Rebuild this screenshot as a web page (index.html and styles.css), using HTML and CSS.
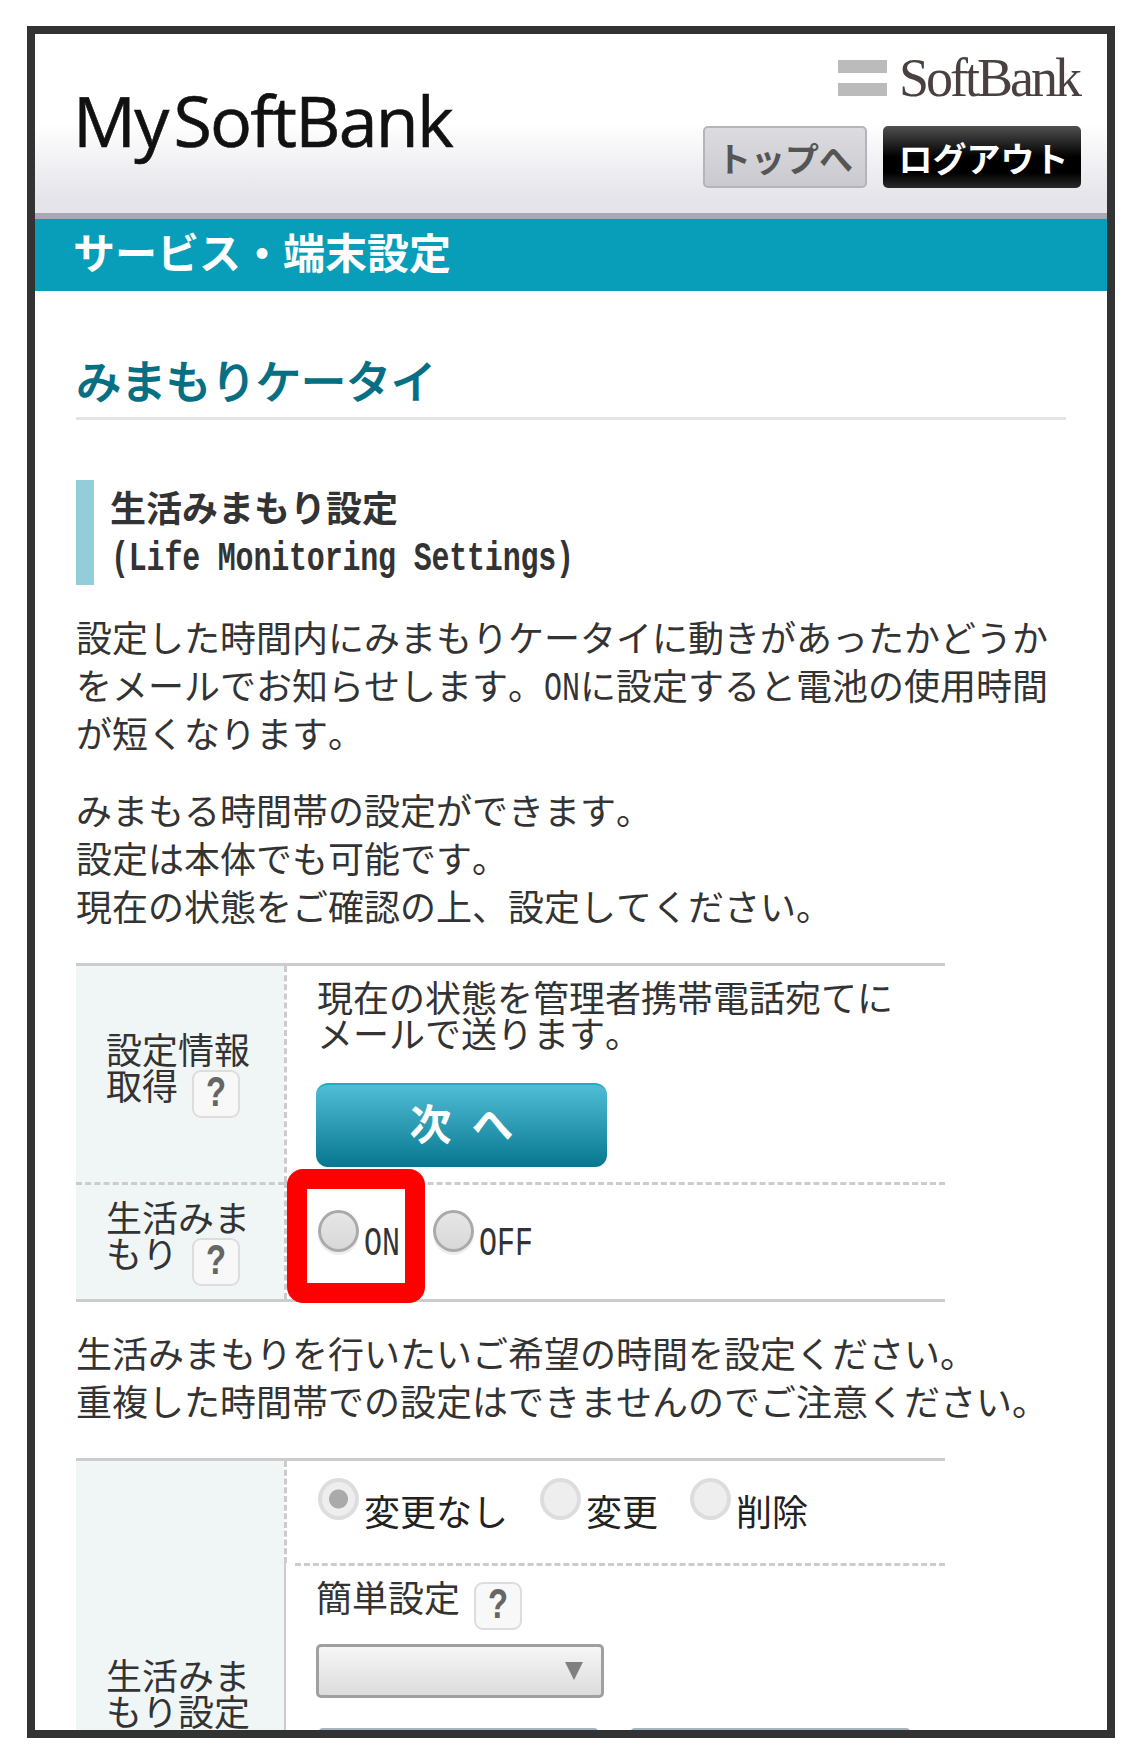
FILE: index.html
```html
<!DOCTYPE html>
<html lang="ja">
<head>
    <meta http-equiv="Content-Type" content="text/html; charset=UTF-8">
    <title>みまもりケータイ</title>
    <link rel="stylesheet" href="styles.css">
</head>
<body>
    <div class="frame">
        <div class="header">
            <div class="mysb-logo">My<span class="mysb-gap"></span>SoftBank</div>
            <div class="header-right">
                <div class="brand">
                    <div class="brand-mark"><i></i><i></i></div>
                    <div class="brand-name">SoftBank</div>
                </div>
                <div class="header-buttons">
                    <a class="btn-top">トップへ</a>
                    <a class="btn-logout">ログアウト</a>
                </div>
            </div>
        </div>
        <div class="band">サービス・端末設定</div>

        <div class="main">
            <h1 class="page-title">みまもりケータイ</h1>
            <h2 class="section-title">生活みまもり設定<br><span class="half half-bold">(Life Monitoring Settings)</span></h2>

            <p class="para">設定した時間内にみまもりケータイに動きがあったかどうかをメールでお知らせします。<span class="half">ON</span>に設定すると電池の使用時間が短くなります。</p>
            <p class="para">みまもる時間帯の設定ができます。<br>設定は本体でも可能です。<br>現在の状態をご確認の上、設定してください。</p>

            <div class="info-table status-table">
                <div class="label-cell"><div>設定情報<br>取得 <span class="help"><b>?</b></span></div></div>
                <div class="value-cell info-cell">
                    <div class="info-text">現在の状態を管理者携帯電話宛てに<br>メールで送ります。</div>
                    <a class="btn-next"><span>次</span><span>へ</span></a>
                </div>
                <div class="label-cell row-split"><div>生活みま<br>もり <span class="help"><b>?</b></span></div></div>
                <div class="value-cell row-split switch-cell">
                    <label class="choice"><input type="radio" name="life" class="radio"><span class="half">ON</span></label>
                    <label class="choice"><input type="radio" name="life" class="radio"><span class="half">OFF</span></label>
                </div>
            </div>

            <p class="para para-after">生活みまもりを行いたいご希望の時間を設定ください。<br>重複した時間帯での設定はできませんのでご注意ください。</p>

            <div class="info-table settings-table">
                <div class="label-cell settings-label"><div>生活みま<br>もり設定</div></div>
                <div class="value-cell mode-cell">
                    <label class="mode"><input type="radio" name="mode" class="radio radio-light" checked>変更なし</label>
                    <label class="mode"><input type="radio" name="mode" class="radio radio-light">変更</label>
                    <label class="mode"><input type="radio" name="mode" class="radio radio-light">削除</label>
                </div>
                <div class="value-cell simple-cell">
                    <div class="simple-title">簡単設定 <span class="help"><b>?</b></span></div>
                    <div class="select-box"><select></select></div>
                </div>
                <div class="value-cell time-cell">
                    <div class="time-select"></div>
                    <div class="time-select"></div>
                </div>
            </div>
        </div>

        <div class="highlight"></div>
    </div>
</body>
</html>
```

FILE: styles.css
```css
html, body {
    margin: 0;
    background-color: #fff;
}

body {
    padding: 26px 25px 26px 27px;
    font-family: "Noto Sans CJK JP", "Noto Sans", sans-serif;
    font-size: 36px;
    color: #333;
    font-kerning: none;
    text-spacing-trim: space-all;
}

.frame {
    position: relative;
    box-sizing: border-box;
    width: 1088px;
    height: 1712px;
    border: 8px solid #333;
    overflow: hidden;
}

/* header */
.header {
    display: flex;
    justify-content: space-between;
    box-sizing: border-box;
    height: 185px;
    padding: 26px 26px 0 38px;
    border-bottom: 6px solid #a8a8b3;
    background: linear-gradient(#fff 0%, #fff 50%, #e4e4ea 92%, #e4e4ea 100%);
}

.mysb-logo {
    margin-top: 20px;
    font-family: "Open Sans", sans-serif;
    font-size: 70px;
    font-kerning: normal;
    line-height: 80px;
    letter-spacing: -1.8px;
    color: #111;
    -webkit-text-stroke: 0.6px #111;
}

.mysb-gap {
    display: inline-block;
    width: 6px;
}

.header-right {
    display: flex;
    flex-direction: column;
    align-items: flex-end;
}

.brand {
    display: flex;
    gap: 12px;
    height: 36px;
    padding-right: 2px;
}

.brand-mark {
    display: flex;
    flex-direction: column;
    justify-content: space-between;
    width: 49px;
}

.brand-mark i {
    display: block;
    height: 13px;
    background-color: #bbb;
}

.brand-name {
    font-family: "Liberation Serif", serif;
    font-size: 54px;
    font-kerning: normal;
    line-height: 36px;
    letter-spacing: -3px;
    color: #4a4040;
}

.header-buttons {
    display: flex;
    gap: 16px;
    margin-top: 30px;
}

.btn-top, .btn-logout {
    display: flex;
    align-items: center;
    justify-content: center;
    box-sizing: border-box;
    height: 62px;
    font-size: 34px;
    font-weight: bold;
    border-radius: 5px;
}

.btn-top {
    width: 164px;
    color: #555;
    border: 2px solid #b4b4bc;
    background: linear-gradient(#dcdce0, #c9c9cf);
}

.btn-logout {
    width: 198px;
    padding-left: 3px;
    color: #fff;
    background: linear-gradient(#505050, #000 50%, #000 75%, #2a2a2a);
}

.band {
    height: 72px;
    padding-left: 38px;
    font-size: 42px;
    font-weight: bold;
    line-height: 64px;
    color: #fff;
    background-color: #089db8;
}

/* content */
.main {
    padding: 0 41px;
}

.page-title {
    margin: 0;
    padding: 63px 0 11px;
    font-size: 45px;
    font-weight: normal;
    line-height: 52px;
    color: #076f84;
    -webkit-text-stroke: 1.6px #076f84;
    border-bottom: 3px solid #e4e4e4;
}

.section-title {
    margin: 60px 0 0;
    padding: 2px 0 7px 16px;
    font-size: 36px;
    font-weight: bold;
    line-height: 48px;
    border-left: 18px solid #94cdda;
}

.half {
    display: inline-block;
    font-family: "Liberation Mono", monospace;
    font-size: 30px;
    font-weight: normal;
    line-height: 1;
    transform: scaleY(1.35);
    transform-origin: 50% 80%;
}

.half-bold {
    margin-left: 1px;
    font-weight: bold;
    letter-spacing: -0.2px;
}

.para {
    margin: 27px 0 0;
    padding-bottom: 2px;
    line-height: 48px;
}

.para-after {
    margin-top: 26px;
}

.info-table {
    display: grid;
    grid-template-columns: 208px 1fr;
    width: 869px;
    margin-top: 32px;
    border-top: 3px solid #ccc;
}

.status-table {
    border-bottom: 3px solid #ccc;
}

.label-cell {
    display: flex;
    align-items: center;
    box-sizing: border-box;
    padding-left: 30px;
    line-height: 36px;
    background-color: #f0f5f5;
}

.value-cell {
    padding-left: 31px;
    border-left: 3px dashed #ccc;
}

.row-split {
    border-top: 3px dashed #ccc;
}

.help {
    display: inline-flex;
    align-items: center;
    justify-content: center;
    box-sizing: border-box;
    width: 48px;
    height: 48px;
    margin: 4px 0 0 6px;
    line-height: 1;
    vertical-align: top;
    border: 2px solid #ddd;
    border-radius: 9px;
    background-color: #f8f8f8;
}

.help b {
    display: block;
    font-family: "Liberation Mono", monospace;
    font-size: 44px;
    color: #666;
    transform: scaleX(0.75);
}

.info-cell {
    height: 216px;
    box-sizing: border-box;
    padding-top: 12px;
}

.info-text {
    margin-left: -1px;
    line-height: 36px;
}

.btn-next {
    display: flex;
    align-items: center;
    justify-content: center;
    gap: 20px;
    box-sizing: border-box;
    width: 291px;
    height: 84px;
    margin: 33px 0 0 -2px;
    padding-bottom: 10px;
    font-size: 42px;
    font-weight: bold;
    color: #fff;
    border-top: 2px solid #27a9c4;
    border-radius: 12px;
    background: linear-gradient(#4fbdd5, #07778f);
}

.switch-cell {
    display: flex;
    box-sizing: border-box;
    height: 117px;
    padding-top: 25px;
}

.choice {
    display: flex;
    align-items: flex-start;
    gap: 5px;
    margin-right: 33px;
}

.choice .half {
    margin-top: 22px;
}

.radio {
    appearance: none;
    box-sizing: border-box;
    flex: none;
    width: 41px;
    height: 42px;
    margin: 0;
    border: 3px solid #aaa;
    border-radius: 50%;
    background: linear-gradient(#e6e6e6, #d8d8d8);
    box-shadow: 0 3px 0 #eee;
}

.radio-light {
    border: 4px solid #ddd;
    background: #eee;
    box-shadow: none;
}

.radio-light:checked {
    background: radial-gradient(circle, #aaa 0, #aaa 9px, #eee 10px);
}

.settings-table {
    grid-template-rows: auto auto 1fr;
    height: 465px;
    box-sizing: border-box;
}

.settings-label {
    grid-row: 1 / span 3;
}

.mode-cell {
    display: flex;
    box-sizing: border-box;
    height: 102px;
    padding-top: 17px;
    color: #222;
}

.mode {
    display: flex;
    align-items: flex-start;
    gap: 5px;
    margin-right: 32px;
    line-height: 64px;
}

.simple-cell, .time-cell {
    position: relative;
    border-left: 2px solid #ccc;
    padding-left: 30px;
}

.simple-cell {
    padding-top: 15px;
}

.simple-cell::before {
    content: "";
    position: absolute;
    top: 0;
    left: 9px;
    right: 0;
    border-top: 3px dashed #ccc;
}

.simple-title {
    height: 52px;
    line-height: 36px;
}

.select-box {
    position: relative;
    width: 288px;
    height: 54px;
    margin-top: 14px;
}

.select-box select {
    appearance: none;
    display: block;
    box-sizing: border-box;
    width: 100%;
    height: 100%;
    border: 3px solid #a0a0a0;
    border-radius: 5px;
    background: linear-gradient(#f6f6f6, #dcdcdc);
}

.select-box::after {
    content: "";
    position: absolute;
    top: 18px;
    right: 21px;
    border-top: 18px solid #808080;
    border-left: 9px solid transparent;
    border-right: 9px solid transparent;
}

.time-cell {
    display: flex;
    gap: 29px;
    padding-top: 30px;
}

.time-select {
    box-sizing: border-box;
    width: 281px;
    height: 54px;
    margin-left: 2px;
    border-top: 2px solid #a5b5bd;
    border-radius: 5px;
}

/* red marker drawn over the ON radio */
.highlight {
    position: absolute;
    top: 1135px;
    left: 252px;
    box-sizing: border-box;
    width: 138px;
    height: 134px;
    border: 20px solid #f00;
    border-radius: 16px;
}
```
